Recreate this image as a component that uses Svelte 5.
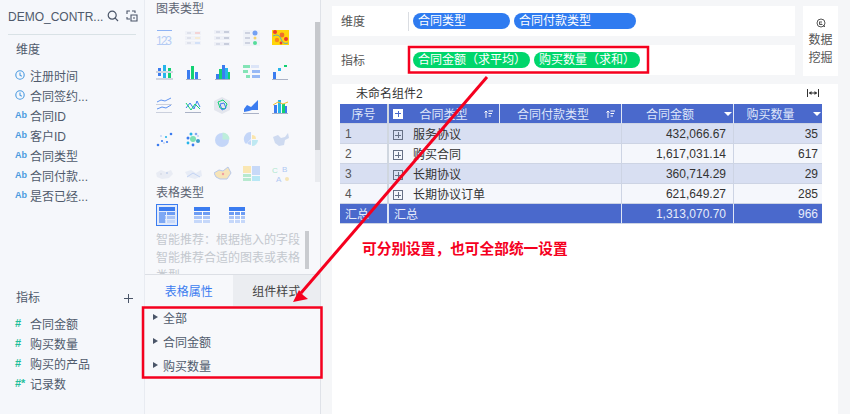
<script>
  const blue = "#3b7cf0";
  const green = "#12d173";
  const cyan = "#27b5ea";
  const base = "#aab2c6";
  const pale = "#c3d4f6";

  const r = (x, y, w, h, f) => ({ t: "r", x, y, w, h, f });
  const c = (x, y, rad, f) => ({ t: "c", x, y, rad, f });
  const l = (d, s, w = 1) => ({ t: "l", d, s, w });
  const a = (d, f) => ({ t: "a", d, f });

  const dotRow = (y, tone) => [r(0, y, 16, 4, "#e6eaf5"), r(2, y + 1, 4, 2, "#b9c0d4"), r(10, y + 1, 5, 2, tone)];

  const charts = [
    { o: 0.55, s: [r(1, 1, 15, 1, blue), { t: "x", v: "123" }] },
    { o: 0.4, s: [...dotRow(2, "#f2a0a0"), ...dotRow(7, "#f5d9a0"), ...dotRow(12, "#9fc0f5")] },
    { o: 0.5, s: [...dotRow(1, "#9aa4be"), ...dotRow(7, "#9aa4be"), ...dotRow(13, "#9aa4be")] },
    { o: 0.7, s: [r(0, 1, 17, 16, "#edf0f8"), c(12, 4, 2.5, blue), c(12, 9, 1.5, "#f2c230"), c(12, 14, 2, green), r(2, 3, 5, 2, "#bcc3d6"), r(2, 8, 5, 2, "#bcc3d6"), r(2, 13, 5, 2, "#bcc3d6")] },
    { o: 1, s: [r(0, 1, 17, 15, "#ffd60a"), c(3, 3, 2, "#ef3a2e"), c(10, 6, 2.4, "#f0702a"), c(14, 10, 2, "#ef3a2e"), c(5, 11, 2.2, "#f58a1f"), c(9, 14, 1.4, "#ef3a2e"), l("M1 7 Q7 4 9 10 T16 14", "#3aa0e8", 0.8)] },

    { o: 1, s: [r(2, 5, 3, 3, blue), r(7, 2, 3, 6, cyan), r(12, 5, 3, 3, green), r(0, 8.5, 17, 1, base), r(2, 10, 3, 3, blue), r(7, 10, 3, 5, cyan), r(12, 10, 3, 5, green), r(0, 15.5, 17, 1, base)] },
    { o: 1, s: [r(2, 7, 3, 9, blue), r(6, 3, 3, 13, green), r(10, 9, 3, 7, blue), r(1, 16, 15, 1, base)] },
    { o: 1, s: [r(2, 11, 3, 5, blue), r(5, 6, 3, 10, green), r(8, 2, 3, 14, blue), r(11, 5, 3, 11, cyan), r(14, 9, 2, 7, green), r(1, 16, 15, 1, base)] },
    { o: 0.5, s: [r(0, 2, 7, 3, green), r(8, 2, 8, 3, pale), r(0, 7, 5, 3, green), r(9, 7, 8, 3, blue), r(3, 12, 4, 3, green), r(9, 12, 8, 3, blue)] },
    { o: 1, s: [r(1, 9, 3, 7, blue), r(6, 5, 3, 3, cyan), r(12, 2, 3, 2, green), r(0, 16, 16, 1, base)] },

    { o: 0.8, s: [l("M1 5 L5 3 L9 4 L15 1", blue), l("M1 12 L6 10 L10 11 L15 8", blue), r(0, 7, 16, 0.7, base), r(0, 15, 16, 0.7, base)] },
    { o: 1, s: [l("M1 11 L5 6 L9 12 L12 4 L15 10", blue), l("M1 6 L6 13 L10 7 L15 12", green), r(0, 15, 16, 1, base)] },
    { o: 1, s: [a("M8 0 L16 4 L16 13 L8 17 L0 13 L0 4 Z", "#e3e6ee"), l("M4 5 L9 3 L13 7 L11 12 L6 11 Z", green), l("M6 7 L10 6 L12 11 L8 13 Z", blue)] },
    { o: 1, s: [a("M1 12 L4 8 L8 10 L11 7 L15 3 L15 13 L9 13 L6 14 L1 15 Z", blue), r(0, 16, 16, 1, base)] },
    { o: 1, s: [r(2, 8, 3, 8, blue), r(6, 3, 3, 13, cyan), r(10, 7, 3, 9, green), r(13, 9, 2, 7, blue), l("M1 8 L6 5 L11 7 L16 5", "#f0c030"), r(0, 16, 16, 1, base)] },

    { o: 1, s: [c(2, 14, 1.3, blue), c(6, 10, 1.1, blue), c(10, 6, 1.1, cyan), c(15, 3, 1.3, blue), c(8, 12, 1.1, pale), c(11, 11, 1.1, blue), c(5, 5, 1, pale)] },
    { o: 1, s: [c(8, 8, 3, "#7fe0b4"), c(13, 10, 2, "#3d9fc8"), c(3, 7, 1.5, blue), c(6, 3, 1.5, cyan), c(11, 3, 1.3, "#7fa8ef"), c(3, 12, 1.4, cyan), c(8, 14, 1.4, blue), c(13, 5, 1.1, pale)] },
    { o: 1, s: [c(8, 9, 7, "#c4d6f8"), a("M8.5 8.5 L8.5 1.5 A7 7 0 0 1 15.5 8.5 Z", "#bdeedb")] },
    { o: 1, s: [a("M8 8 L8 1 A7 7 0 0 0 3 13 Z", "#c4d6f8"), a("M9 8 L9 4 A4 4 0 0 1 13 8 Z", "#fbe6ae"), a("M9 9 L15 9 A6 6 0 0 1 9 15 Z", "#bfe9f2"), a("M8 9 L8 14 A5 5 0 0 1 4 12 Z", "#c4d6f8")] },
    { o: 0.8, s: [a("M1 6 L6 4 L9 7 L13 6 L16 2 L17 7 L13 9 L12 14 L7 15 L3 12 Z", "#c4d3ee")] },

    { o: 0.5, s: [a("M0 8 L5 5 L10 7 L15 5 L17 9 L13 13 L6 14 L1 12 Z", "#dde2ee"), c(5, 9, 1, "#b8c0d4"), c(11, 8, 1, "#8fa8dc")] },
    { o: 0.5, s: [a("M0 7 L6 5 L11 8 L16 5 L17 11 L10 14 L3 12 Z", "#d9e1f2"), l("M2 12 L8 8 L15 12", "#8fb0ee")] },
    { o: 0.8, s: [a("M0 8 L5 5 L9 6 L14 2 L17 8 L13 14 L6 14 L2 12 Z", "#f6e0a8"), l("M0 8 L5 5 L9 6 L14 2 L17 8 L13 14 L6 14 L2 12 Z", "#a9bde8"), c(9, 9, 1.2, "#f08a8a")] },
    { o: 0.8, s: [r(0, 1, 8, 7, "#fbe3a2"), r(9, 1, 8, 9, "#bcd2f8"), r(0, 9, 8, 3, "#a8e6c5"), r(0, 13, 8, 3, "#a8e6c5"), r(9, 11, 8, 5, "#a9e3f4")] },
    { o: 0.6, s: [{ t: "x2", v: "C", x: 0, y: 8, f: "#7fdcb0" }, { t: "x2", v: "B", x: 10, y: 7, f: "#7fa8ef" }, { t: "x2", v: "A", x: 4, y: 17, f: "#7fa8ef" }, c(15, 14, 2, "#f5d98a")] }
  ];

  const tableGrid = [
    [1, 1, 16, 4, blue], [1, 6, 16, 3, "#6d9cf3"], [1, 10, 16, 3, "#a9c4f7"], [1, 14, 16, 3, "#c6d8fa"]
  ];

  const dims = [
    { k: "time", n: "注册时间" },
    { k: "time", n: "合同签约..." },
    { k: "ab", n: "合同ID" },
    { k: "ab", n: "客户ID" },
    { k: "ab", n: "合同类型" },
    { k: "ab", n: "合同付款..." },
    { k: "ab", n: "是否已经..." }
  ];
  const metrics = ["合同金额", "购买数量", "购买的产品", "记录数"];
  const props = ["全部", "合同金额", "购买数量"];
  const rows = [
    ["1", "服务协议", "432,066.67", "35"],
    ["2", "购买合同", "1,617,031.14", "617"],
    ["3", "长期协议", "360,714.29", "29"],
    ["4", "长期协议订单", "621,649.27", "285"]
  ];
</script>

<div class="page">
  <aside class="fields">
    <div class="source">
      <span class="source-name">DEMO_CONTR...</span>
      <svg width="12" height="12" viewBox="0 0 12 12" fill="none" stroke="#4a5568" stroke-width="1.2"><circle cx="5.2" cy="5.2" r="4" /><path d="M8.2 8.2 L11 11" /></svg>
      <svg width="12" height="12" viewBox="0 0 12 12" fill="none" stroke="#4a5568" stroke-width="1.1"><path d="M4 1 H1 V4 M1 7 V9 H4 M6 1 H9 V3 M5 5 H11 V11 H5 Z M7 8 H9" /></svg>
    </div>
    <div class="group-title first">维度</div>
    <ul>
      {#each dims as d}
        <li>
          {#if d.k === "time"}
            <svg class="ico" width="10" height="10" viewBox="0 0 10 10" fill="none" stroke="#4a9be0" stroke-width="1.1"><circle cx="5" cy="5" r="4.2" /><path d="M5 2.5 V5.3 L6.8 6.3" /></svg>
          {:else}
            <span class="ab">Ab</span>
          {/if}
          <span>{d.n}</span>
        </li>
      {/each}
    </ul>
    <div class="group-title metric-title">
      <span>指标</span>
      <svg width="11" height="11" viewBox="0 0 11 11" stroke="#4a5568" stroke-width="1"><path d="M5.5 1 V10 M1 5.5 H10" /></svg>
    </div>
    <ul>
      {#each metrics as m, i}
        <li>
          <span class="hash">#{i === 3 ? "*" : ""}</span>
          <span>{m}</span>
        </li>
      {/each}
    </ul>
  </aside>

  <section class="config">
    <div class="types">
      <div class="scroll-a"></div>
      <h4>图表类型</h4>
      <div class="chart-grid">
        {#each charts as ch}
          <svg width="18" height="18" viewBox="0 0 18 18" fill="none" opacity={ch.o}>
            {#each ch.s as s}
              {#if s.t === "r"}
                <rect x={s.x} y={s.y} width={s.w} height={s.h} fill={s.f} />
              {:else if s.t === "c"}
                <circle cx={s.x} cy={s.y} r={s.rad} fill={s.f} />
              {:else if s.t === "l"}
                <path d={s.d} stroke={s.s} stroke-width={s.w} />
              {:else if s.t === "a"}
                <path d={s.d} fill={s.f} />
              {:else if s.t === "x"}
                <text x="0" y="16" font-size="12" font-family="Liberation Sans, sans-serif" fill="#7fa8ef" textLength="16">{s.v}</text>
              {:else}
                <text x={s.x} y={s.y} font-size="8" font-family="Liberation Sans, sans-serif" fill={s.f}>{s.v}</text>
              {/if}
            {/each}
          </svg>
        {/each}
      </div>
      <h4 class="table-head">表格类型</h4>
      <div class="table-types">
        <div class="tt selected">
          <svg width="18" height="18" viewBox="0 0 18 18">
            {#each tableGrid as g}<rect x={g[0]} y={g[1]} width={g[2]} height={g[3]} fill={g[4]} />{/each}
            <rect x="1" y="6" width="6" height="11" fill="#7ea8f4" />
            <rect x="8" y="6" width="1" height="11" fill="#e6eefc" />
          </svg>
        </div>
        <div class="tt">
          <svg width="18" height="18" viewBox="0 0 18 18">
            {#each tableGrid as g}<rect x={g[0]} y={g[1]} width={g[2]} height={g[3]} fill={g[4]} />{/each}
            <rect x="9" y="5" width="1" height="12" fill="#fff" />
          </svg>
        </div>
        <div class="tt">
          <svg width="18" height="18" viewBox="0 0 18 18">
            {#each tableGrid as g}<rect x={g[0]} y={g[1]} width={g[2]} height={g[3]} fill={g[4]} />{/each}
            <rect x="6" y="5" width="1" height="12" fill="#fff" />
            <rect x="12" y="5" width="1" height="12" fill="#fff" />
          </svg>
        </div>
      </div>
      <div class="hint">
        <p>智能推荐：根据拖入的字段智能推荐合适的图表或表格类型</p>
        <div class="scroll-b"></div>
      </div>
    </div>
    <div class="tabs">
      <div class="tab on">表格属性</div>
      <div class="tab">组件样式</div>
    </div>
    <ul class="props">
      {#each props as p}
        <li><i class="caret"></i>{p}</li>
      {/each}
    </ul>
  </section>

  <main>
    <div class="top">
      <div class="wells">
        <div class="well">
          <span class="well-label">维度</span>
          <span class="sep"></span>
          <span class="pill dim">合同类型</span>
          <span class="pill dim wide">合同付款类型</span>
        </div>
        <div class="well">
          <span class="well-label">指标</span>
          <span class="sep clear"></span>
          <span class="pill num first-num">合同金额（求平均）</span>
          <span class="pill num second-num">购买数量（求和）</span>
        </div>
      </div>
      <div class="mining">
        <svg width="10" height="10" viewBox="0 0 10 10" fill="none" stroke="#555" stroke-width="1"><circle cx="5" cy="5" r="4" /><path d="M3.5 3.5 V6.5 H6.5 M5 3 V5.5 M7 7 L9 9" /></svg>
        <span>数据</span>
        <span>挖掘</span>
      </div>
    </div>

    <div class="widget">
      <div class="widget-head">
        <span>未命名组件2</span>
        <svg width="12" height="8" viewBox="0 0 12 8" fill="#333" stroke="#333"><path d="M0.5 0 V8 M11.5 0 V8 M2 4 H10" stroke-width="1" /><path d="M2 4 L4.5 2 V6 Z M10 4 L7.5 2 V6 Z" stroke="none" /></svg>
      </div>
      <table>
        <colgroup>
          <col style="width:49px" /><col style="width:111px" /><col style="width:122px" /><col style="width:112px" /><col style="width:88px" />
        </colgroup>
        <thead>
          <tr>
            <th class="idx"><span class="label">序号</span></th>
            <th>
              <div class="th">
                <span class="plus light"></span>
                <span class="label">合同类型</span>
                <svg width="9" height="8" viewBox="0 0 9 8" stroke="#fff" fill="none"><path d="M2 8 V1 M0.5 2.5 L2 1 L3.5 2.5 M4.5 1 H9 M4.5 3.5 H8 M4.5 6 H7" /></svg>
              </div>
            </th>
            <th>
              <div class="th">
                <span class="label">合同付款类型</span>
                <svg width="9" height="8" viewBox="0 0 9 8" stroke="#fff" fill="none"><path d="M2 8 V1 M0.5 2.5 L2 1 L3.5 2.5 M4.5 1 H9 M4.5 3.5 H8 M4.5 6 H7" /></svg>
              </div>
            </th>
            <th><div class="th tri"><span class="label">合同金额</span><i class="down"></i></div></th>
            <th class="last"><div class="th tri"><span class="label">购买数量</span><i class="down"></i></div></th>
          </tr>
        </thead>
        <tbody>
          {#each rows as row, i}
            <tr class:odd={i % 2 === 0}>
              <td class="idx">{row[0]}</td>
              <td colspan="2" class="name"><span class="plus"></span>{row[1]}</td>
              <td class="n">{row[2]}</td>
              <td class="n last">{row[3]}</td>
            </tr>
          {/each}
          <tr class="total">
            <td class="idx">汇总</td>
            <td colspan="2" class="sum">汇总</td>
            <td class="n">1,313,070.70</td>
            <td class="n last">966</td>
          </tr>
        </tbody>
      </table>
      <p class="note">可分别设置，也可全部统一设置</p>
    </div>
  </main>

  <svg class="marks" width="850" height="414" viewBox="0 0 850 414" fill="none">
    <rect x="409" y="47" width="239" height="25.5" stroke="#f5001e" stroke-width="2.5" />
    <rect x="143" y="307.5" width="178.5" height="70" stroke="#f5001e" stroke-width="2.5" />
    <path d="M487 77 L301 293" stroke="#f5001e" stroke-width="3" />
    <path d="M293 302 L299 290 L303 295 L308 299 Z" fill="#f5001e" />
  </svg>
</div>

<style>
  :global(body) {
    margin: 0;
    background: #fff;
  }

  .page {
    position: relative;
    width: 850px;
    height: 414px;
    display: flex;
    overflow: hidden;
    font-family: "Liberation Sans", "Noto Sans CJK SC", sans-serif;
    font-size: 12px;
    color: #4f5a6c;
  }

  ul {
    list-style: none;
    margin: 0;
    padding: 0;
  }

  .fields {
    box-sizing: border-box;
    width: 145px;
    flex: none;
    padding: 0 8px;
    background: #f5f7fb;
    border-right: 1px solid #e8ebf1;
  }

  .source {
    display: flex;
    align-items: center;
    gap: 7px;
    height: 34px;
    border-bottom: 1px solid #d9e2e6;
  }

  .source svg {
    flex: none;
    position: relative;
    left: 2px;
    top: -1px;
  }

  .source-name {
    flex: 1;
    min-width: 0;
    white-space: nowrap;
  }

  .group-title {
    padding-left: 8px;
    line-height: 18px;
  }

  .first {
    margin-top: 6px;
    margin-bottom: 6px;
  }

  .metric-title {
    display: flex;
    align-items: center;
    justify-content: space-between;
    padding-right: 2px;
    margin-top: 84px;
    margin-bottom: 6px;
    box-sizing: border-box;
    width: 128px;
  }

  .fields li {
    display: flex;
    align-items: center;
    height: 20px;
    padding-left: 7px;
  }

  .fields li > :first-child {
    flex: none;
    width: 15px;
  }

  .ico {
    flex: none;
    width: 10px !important;
    margin-right: 5px;
  }

  .ab {
    font-size: 9px;
    font-weight: bold;
    color: #4a9be0;
  }

  .hash {
    color: #1fbf9b;
    font-size: 11px;
    font-weight: bold;
  }

  .config {
    box-sizing: border-box;
    width: 176px;
    flex: none;
    display: flex;
    flex-direction: column;
    background: #f7f8fb;
    border-right: 1px solid #dfe2e8;
  }

  .types {
    position: relative;
    height: 275px;
    flex: none;
    box-sizing: border-box;
    padding: 0 11px;
    overflow: hidden;
    border-bottom: 1px solid #dcdfe5;
  }

  h4 {
    margin: 0;
    font-size: 12px;
    font-weight: normal;
    line-height: 18px;
    color: #5d6473;
    height: 20px;
  }

  .scroll-a {
    position: absolute;
    right: 0;
    top: 22px;
    width: 5px;
    height: 160px;
    background: linear-gradient(#c6c8cc 128px, #e9ebef 128px);
  }

  .chart-grid {
    display: grid;
    grid-template-columns: repeat(5, 18px);
    column-gap: 11px;
    row-gap: 16px;
    margin-top: 9px;
  }

  .chart-grid svg {
    display: block;
  }

  .table-head {
    margin-top: 1px;
    margin-bottom: -1px;
  }

  .table-types {
    display: flex;
    gap: 13px;
    height: 24px;
    align-items: center;
  }

  .tt {
    width: 22px;
    height: 22px;
    display: flex;
    align-items: center;
    justify-content: center;
    box-sizing: border-box;
  }

  .tt.selected {
    background: #e2eafa;
    border: 1px solid #3b7cf0;
  }

  .hint {
    position: relative;
    margin-top: 3px;
    color: #c4c8cf;
    width: 146px;
  }

  .hint p {
    margin: 0;
    line-height: 18px;
    width: 146px;
    padding-top: 1px;
  }

  .scroll-b {
    position: absolute;
    right: -7px;
    top: 1px;
    width: 4px;
    height: 38px;
    background: #c9cbcf;
  }

  .tabs {
    display: flex;
    height: 31px;
    flex: none;
  }

  .tab {
    flex: 1;
    display: flex;
    align-items: center;
    justify-content: center;
    background: #ebedf1;
    color: #444;
  }

  .tab.on {
    background: #f7f8fb;
    color: #3b7cf0;
  }

  .props {
    margin-top: -1px;
  }

  .props li {
    display: flex;
    align-items: center;
    height: 24px;
    padding-left: 8px;
  }

  .caret {
    width: 0;
    height: 0;
    border-left: 5px solid #4a5568;
    border-top: 3.5px solid transparent;
    border-bottom: 3.5px solid transparent;
    margin-right: 5px;
  }

  main {
    flex: 1;
    box-sizing: border-box;
    background: #f5f6f8;
    padding: 6px 12px 0 11px;
    display: flex;
    flex-direction: column;
    gap: 8px;
  }

  .top {
    display: flex;
    gap: 8px;
  }

  .wells {
    width: 463px;
    display: flex;
    flex-direction: column;
    gap: 9px;
  }

  .well {
    display: flex;
    align-items: center;
    height: 30px;
    background: #fff;
    padding-left: 9px;
  }

  .well-label {
    width: 67px;
    color: #555;
    margin-top: -1px;
  }

  .sep {
    width: 1px;
    height: 19px;
    background: #dadde2;
    margin-right: 4px;
  }

  .sep.clear {
    background: transparent;
  }

  .pill {
    height: 16px;
    line-height: 16px;
    border-radius: 8px;
    padding: 0 0 0 5px;
    margin-right: 4px;
    color: #fff;
    white-space: nowrap;
    box-sizing: border-box;
    overflow: hidden;
  }

  .pill.dim {
    background: #2f7bf0;
    width: 97px;
  }

  .pill.dim.wide {
    width: 122px;
  }

  .pill.num {
    background: #00d66b;
  }

  .first-num {
    width: 117px;
  }

  .second-num {
    width: 106px;
  }

  .mining {
    width: 35px;
    height: 70px;
    background: #fff;
    display: flex;
    flex-direction: column;
    align-items: center;
    padding-top: 12px;
    box-sizing: border-box;
    color: #555;
    line-height: 18px;
  }

  .mining svg {
    margin-bottom: 3px;
  }

  .widget {
    flex: 1;
    background: #fff;
    padding: 0 16px 0 8px;
  }

  .widget-head {
    display: flex;
    align-items: center;
    justify-content: space-between;
    height: 17px;
    margin-bottom: 3px;
    padding: 0 3px 0 16px;
    color: #333;
  }

  table {
    width: 482px;
    border-collapse: separate;
    border-spacing: 0;
    table-layout: fixed;
    font-size: 12px;
    color: #333;
  }

  th {
    height: 19px;
    padding: 0;
    background: #4a69cc;
    color: #dfe6fa;
    font-weight: normal;
    border-right: 1px solid #dfe6f5;
    border-bottom: 1px solid #cdd4e4;
  }

  th.last,
  td.last {
    border-right: 0;
  }

  .th {
    display: flex;
    align-items: center;
    height: 19px;
    padding-right: 6px;
  }

  .th .label {
    flex: 1;
    text-align: center;
  }

  .th.tri {
    padding-right: 1px;
  }

  .th .plus {
    margin-left: 4px;
  }

  .down {
    width: 0;
    height: 0;
    border-top: 4px solid #fff;
    border-left: 4px solid transparent;
    border-right: 4px solid transparent;
    margin-left: 6px;
  }

  td {
    height: 19px;
    padding: 0;
    background: #f5f7fc;
    border-right: 1px solid #cdd4e4;
    border-bottom: 1px solid #cdd4e4;
    white-space: nowrap;
  }

  .odd td {
    background: #d8dff2;
  }

  th.idx,
  td.idx {
    border-right-width: 2px;
    border-right-color: #d0d7e0;
  }

  td.idx {
    padding-left: 5px;
    color: #555;
  }

  .name {
    padding-left: 4px;
  }

  .n {
    text-align: right;
    padding-right: 7px;
    color: #333;
  }

  .n.last {
    padding-right: 4px;
  }

  .plus {
    display: inline-block;
    position: relative;
    box-sizing: border-box;
    width: 10px;
    height: 10px;
    margin-right: 10px;
    flex: none;
    border: 1px solid #667085;
    background:
      linear-gradient(#667085, #667085) center / 6px 1px no-repeat,
      linear-gradient(#667085, #667085) center / 1px 6px no-repeat;
    vertical-align: -1px;
  }

  .plus.light {
    background:
      linear-gradient(#4a69cc, #4a69cc) center / 6px 1px no-repeat,
      linear-gradient(#4a69cc, #4a69cc) center / 1px 6px no-repeat,
      #fff;
    border-color: #fff;
    margin-right: 0;
  }

  .total td {
    background: #4a69cc;
    color: #e6ebfa;
    border-right-color: #dfe6f5;
  }

  .total .sum {
    padding-left: 5px;
  }

  .note {
    margin: 15px 0 0 22px;
    font-size: 14.7px;
    font-weight: bold;
    line-height: 20px;
    color: #f5001e;
  }

  .marks {
    position: absolute;
    left: 0;
    top: 0;
    pointer-events: none;
  }
</style>
